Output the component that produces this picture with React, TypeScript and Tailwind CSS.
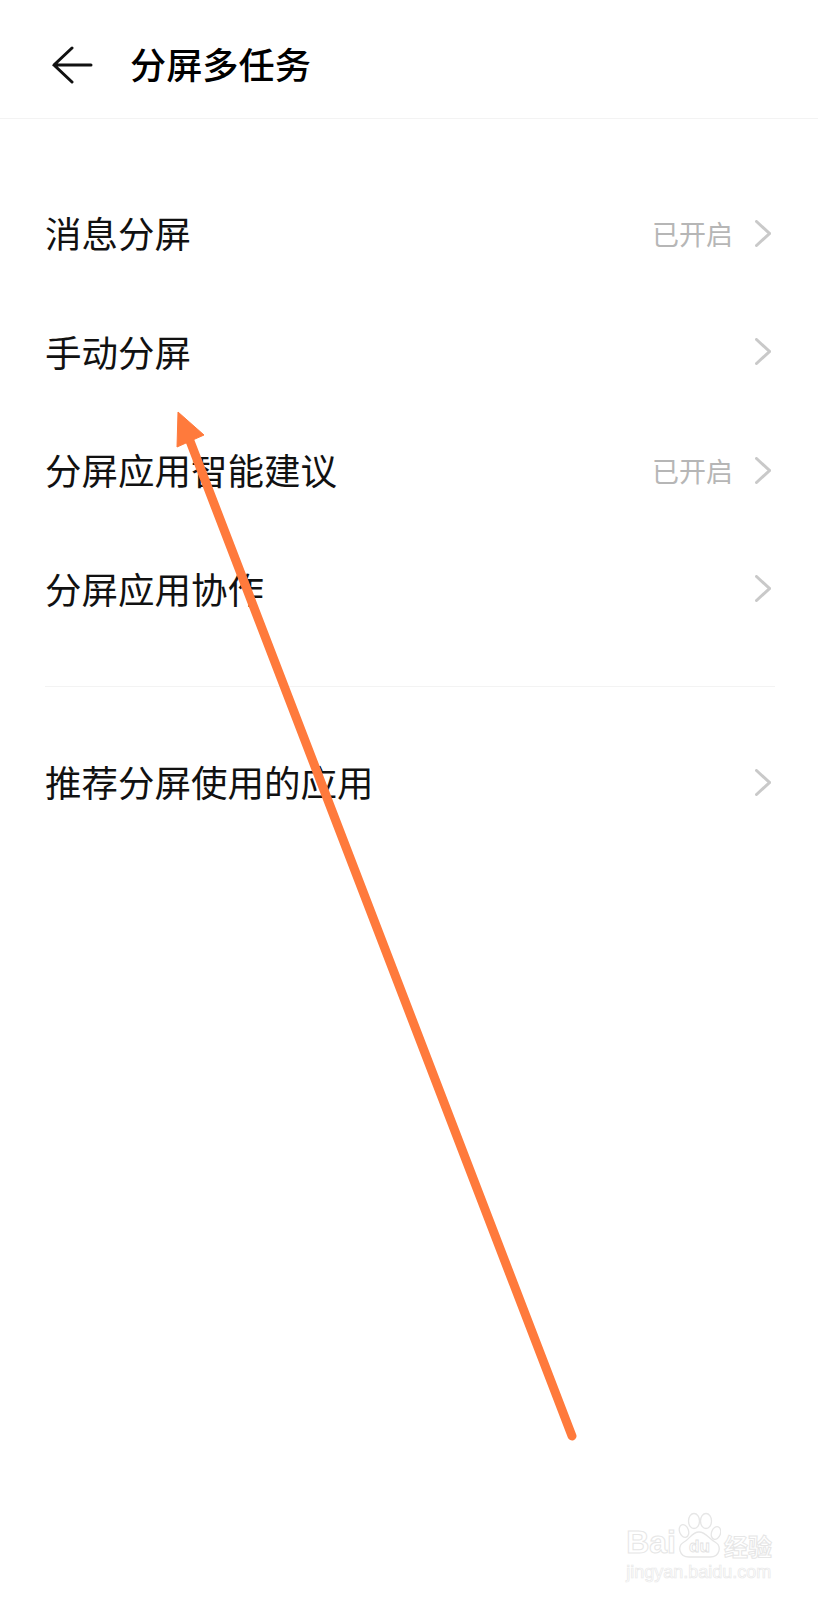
import React from 'react'

const Chevron = () => (
  <svg width="16" height="27" viewBox="0 0 16 27" fill="none" className="block">
    <path d="M1.5 1.5 L14.5 13.5 L1.5 25.5" stroke="#c9c9c9" strokeWidth="3" strokeLinecap="round" strokeLinejoin="miter" />
  </svg>
)

const Row = ({ label, value }: { label: string; value?: string }) => (
  <div className="h-[118.5px] flex items-center justify-between pl-[45px] pr-[47px]">
    <span className="text-[36.5px] leading-none text-[#111111]">{label}</span>
    <div className="flex items-center gap-[22px]">
      {value && <span className="text-[27px] leading-none text-[#b6b6b6]">{value}</span>}
      <Chevron />
    </div>
  </div>
)

const Watermark = () => (
  <div className="absolute right-[46px] bottom-[19px] flex flex-col gap-[5px] text-white">
    <div className="flex items-end">
      <span className="text-[32px] leading-none font-bold [font-family:'Liberation_Sans',sans-serif] [-webkit-text-stroke:1px_#e6e6e6]">Bai</span>
      <div className="relative ml-[2px] w-[43px] h-[46px]">
        <svg width="43" height="46" viewBox="0 0 43 46" fill="none" stroke="#e6e6e6" strokeWidth="1.3" className="block">
          <ellipse cx="6" cy="19" rx="4.5" ry="6.5" transform="rotate(-20 6 19)" />
          <ellipse cx="16" cy="9" rx="5.5" ry="7.5" />
          <ellipse cx="28" cy="9" rx="5.5" ry="7.5" />
          <ellipse cx="38" cy="21" rx="4.5" ry="6.5" transform="rotate(20 38 21)" />
          <path d="M21 20 C14 20 12 27 6 30 C-1 34 1 45 11 45 C17 45 26 45 32 45 C42 45 44 34 37 30 C30 26 28 20 21 20 Z" fill="white" />
        </svg>
        <span className="absolute inset-x-0 bottom-[3px] text-center text-[17px] leading-none font-bold [font-family:'Liberation_Sans',sans-serif] [-webkit-text-stroke:0.8px_#e2e2e2]">du</span>
      </div>
      <span className="ml-[3px] text-[24px] leading-none font-bold [-webkit-text-stroke:1px_#e6e6e6]">经验</span>
    </div>
    <span className="text-[18px] leading-none [font-family:'Liberation_Sans',sans-serif] [-webkit-text-stroke:0.7px_#e9e9e9]">jingyan.baidu.com</span>
  </div>
)

export default function App() {
  return (
    <div className="relative w-[818px] h-[1600px] overflow-hidden bg-white [font-family:'Noto_Sans_CJK_SC',sans-serif]">
      <header className="h-[119px] border-b border-[#f3f3f3] flex items-center pl-[51px] pt-[8px]">
        <svg width="42" height="38" viewBox="0 0 42 38" fill="none" className="block mt-[4px]">
          <path d="M21 2 L3 19 L21 36 M3 19 H40" stroke="#111111" strokeWidth="3" strokeLinecap="round" strokeLinejoin="miter" />
        </svg>
        <h1 className="ml-[37px] text-[36.2px] leading-none font-medium text-black">分屏多任务</h1>
      </header>

      <div className="pt-[55px]">
        <Row label="消息分屏" value="已开启" />
        <Row label="手动分屏" />
        <Row label="分屏应用智能建议" value="已开启" />
        <Row label="分屏应用协作" />
      </div>

      <div className="mt-[38px] ml-[45px] mr-[43px] border-t border-[#f3f3f3]" />

      <div className="mt-[36px]">
        <Row label="推荐分屏使用的应用" />
      </div>

      {/* annotation arrow over the list */}
      <svg width="818" height="1600" viewBox="0 0 818 1600" fill="none" className="absolute inset-0 pointer-events-none">
        <path d="M572 1436 L190 441" stroke="#ff7a3c" strokeWidth="9" strokeLinecap="round" />
        <path d="M178 412 L204 435 L177 447 Z" fill="#ff7a3c" stroke="#ff7a3c" strokeWidth="1" strokeLinejoin="round" />
      </svg>

      <Watermark />
    </div>
  )
}
